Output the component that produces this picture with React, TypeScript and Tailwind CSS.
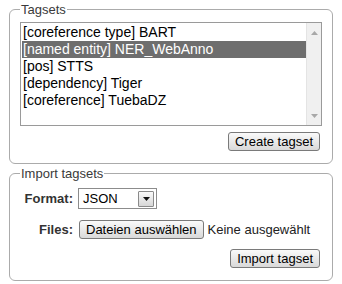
import React from "react";

const rows = [
  "[coreference type] BART",
  "[named entity] NER_WebAnno",
  "[pos] STTS",
  "[dependency] Tiger",
  "[coreference] TuebaDZ",
];

function Btn({ children, className = "" }: { children: React.ReactNode; className?: string }) {
  return (
    <button
      className={
        "h-[19px] px-[6px] border border-[#7a7a7a] rounded-[3px] bg-gradient-to-b from-[#fafafa] to-[#d9d9d9] text-[13px] leading-[17px] text-black " +
        className
      }
    >
      {children}
    </button>
  );
}

export default function App() {
  return (
    <div
      className="w-[342px] h-[284px] bg-white pl-[9px] pt-[2px] text-[13px]"
      style={{ fontFamily: '"Liberation Sans", Arial, sans-serif' }}
    >
      <fieldset className="w-[324px] border border-[#ababab] rounded-[6px] px-[10px] pt-[5px] pb-[12px]">
        <legend className="px-[1px] text-[13px] leading-[15px] text-[#3a3a3a]">Tagsets</legend>
        <div className="flex h-[104px] border border-[#9a9a9a] bg-white">
          <div className="flex-1 pt-[1px] pl-[1px]">
            {rows.map((r, i) => (
              <div
                key={r}
                className={
                  "h-[17px] leading-[17px] pl-[1px] text-[14px] whitespace-nowrap " +
                  (i === 1 ? "bg-[#6e6e6e] text-white" : "text-black")
                }
              >
                {r}
              </div>
            ))}
          </div>
          <div className="w-[15px] bg-[#f0f0f0] border-l border-[#e4e4e4] flex flex-col items-center justify-between pt-[8px] pb-[7px]">
            <svg width="7" height="4" viewBox="0 0 7 4">
              <path d="M0 4 L3.5 0 L7 4 Z" fill="#a8a8a8" />
            </svg>
            <svg width="7" height="4" viewBox="0 0 7 4">
              <path d="M0 0 L7 0 L3.5 4 Z" fill="#a8a8a8" />
            </svg>
          </div>
        </div>
        <div className="flex justify-end mt-[6px] pr-[2px]">
          <Btn>Create tagset</Btn>
        </div>
      </fieldset>

      <fieldset className="mt-[2px] w-[324px] border border-[#ababab] rounded-[6px] px-[10px] pt-[7px] pb-[12px]">
        <legend className="px-[1px] text-[13px] leading-[15px] text-[#3a3a3a]">Import tagsets</legend>
        <div className="grid grid-cols-[53px_auto] gap-x-[5px] gap-y-[11px] items-center">
          <div className="text-right font-bold text-[#333] leading-[15px]">Format:</div>
          <div className="flex">
            <div className="w-[79px] h-[21px] border border-[#8c8c8c] bg-white flex items-center justify-between pl-[4px] pr-[2px]">
              <span className="text-black leading-[15px]">JSON</span>
              <div className="w-[16px] h-[16px] border border-[#8a8a8a] rounded-[1px] bg-gradient-to-b from-[#fafafa] to-[#d6d6d6] flex items-center justify-center">
                <svg width="7" height="4" viewBox="0 0 7 4">
                  <path d="M0 0 L7 0 L3.5 4 Z" fill="#111" />
                </svg>
              </div>
            </div>
          </div>
          <div className="text-right font-bold text-[#333] leading-[15px]">Files:</div>
          <div className="flex items-center pl-[1px]">
            <Btn>Dateien auswählen</Btn>
            <span className="ml-[4px] text-[#222] leading-[15px]">Keine ausgewählt</span>
          </div>
        </div>
        <div className="flex justify-end mt-[10px] pr-[2px]">
          <Btn>Import tagset</Btn>
        </div>
      </fieldset>
    </div>
  );
}
